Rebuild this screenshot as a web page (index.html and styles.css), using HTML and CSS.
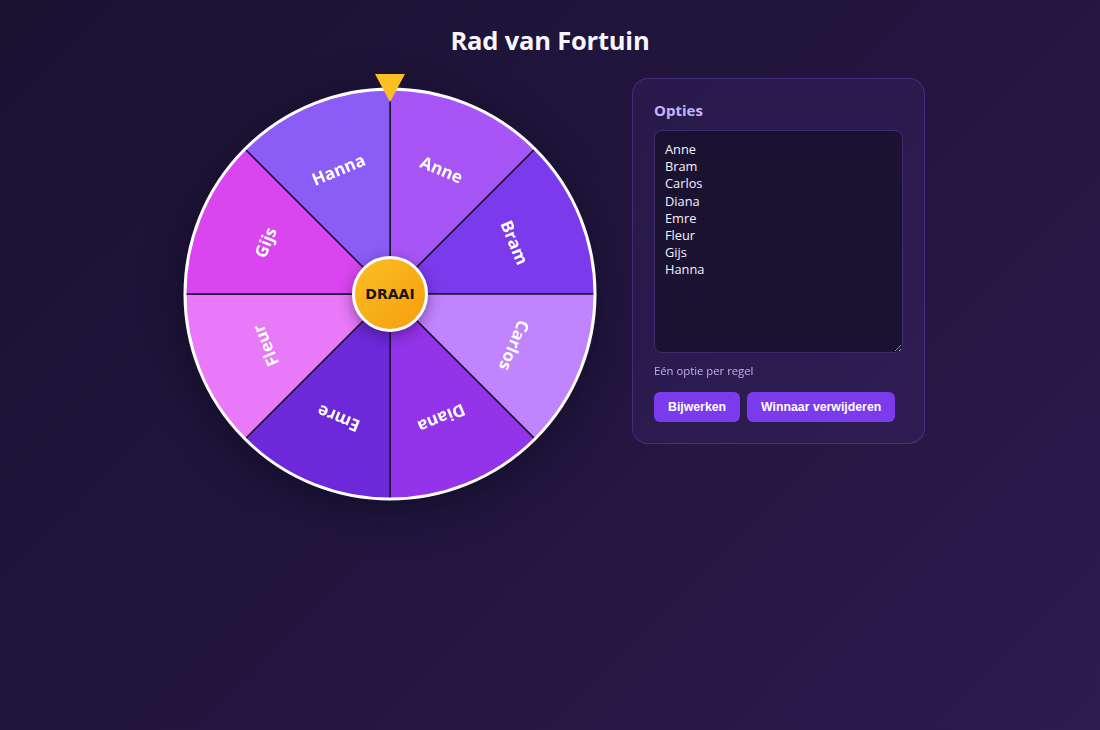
FILE: index.html
```html
<!DOCTYPE html>
<html lang="nl">
<head>
<meta charset="utf-8">
<title>Rad van Fortuin</title>
<link rel="stylesheet" href="styles.css">
</head>
<body>
<div class="app">
  <h1 class="title">Rad van Fortuin</h1>
  <div class="layout">
    <div class="wheel-wrap">
      <div class="pointer"></div>
      <svg class="wheel" viewBox="0 0 420 420" width="420" height="420">
        <g class="segments">
          <path class="seg seg-anne" d="M210 210 L210 5 A205 205 0 0 1 354.96 65.04 Z"/>
          <path class="seg seg-bram" d="M210 210 L354.96 65.04 A205 205 0 0 1 415 210 Z"/>
          <path class="seg seg-carlos" d="M210 210 L415 210 A205 205 0 0 1 354.96 354.96 Z"/>
          <path class="seg seg-diana" d="M210 210 L354.96 354.96 A205 205 0 0 1 210 415 Z"/>
          <path class="seg seg-emre" d="M210 210 L210 415 A205 205 0 0 1 65.04 354.96 Z"/>
          <path class="seg seg-fleur" d="M210 210 L65.04 354.96 A205 205 0 0 1 5 210 Z"/>
          <path class="seg seg-gijs" d="M210 210 L5 210 A205 205 0 0 1 65.04 65.04 Z"/>
          <path class="seg seg-hanna" d="M210 210 L65.04 65.04 A205 205 0 0 1 210 5 Z"/>
        </g>
        <circle class="rim" cx="210" cy="210" r="205"/>
        <g class="labels">
          <text class="label" transform="translate(261.66 85.28) rotate(22.5)">Anne</text>
          <text class="label" transform="translate(334.72 158.34) rotate(67.5)">Bram</text>
          <text class="label" transform="translate(334.72 261.66) rotate(112.5)">Carlos</text>
          <text class="label" transform="translate(261.66 334.72) rotate(157.5)">Diana</text>
          <text class="label" transform="translate(158.34 334.72) rotate(202.5)">Emre</text>
          <text class="label" transform="translate(85.28 261.66) rotate(247.5)">Fleur</text>
          <text class="label" transform="translate(85.28 158.34) rotate(292.5)">Gijs</text>
          <text class="label" transform="translate(158.34 85.28) rotate(337.5)">Hanna</text>
        </g>
      </svg>
      <button class="spin">DRAAI</button>
    </div>
    <div class="panel">
      <h2 class="panel-title">Opties</h2>
      <textarea class="options">Anne
Bram
Carlos
Diana
Emre
Fleur
Gijs
Hanna</textarea>
      <p class="hint">Eén optie per regel</p>
      <div class="actions">
        <button class="btn">Bijwerken</button>
        <button class="btn">Winnaar verwijderen</button>
      </div>
    </div>
  </div>
</div>
</body>
</html>
```

FILE: styles.css
```css
html, body {
  margin: 0;
  padding: 0;
}

body {
  min-height: 100vh;
  background: linear-gradient(135deg, #1b1232 0%, #221640 55%, #2e1a4f 100%);
  font-family: "Open Sans", "Noto Sans", sans-serif;
  color: #f5f3ff;
}

.app {
  padding-top: 22px;
}

.title {
  margin: 0 0 20px;
  text-align: center;
  font-size: 25.5px;
  line-height: 36px;
  font-weight: 700;
  color: #f8f5ff;
  letter-spacing: -0.2px;
}

.layout {
  display: flex;
  justify-content: center;
  align-items: flex-start;
  gap: 32px;
  padding-left: 5px;
}

.wheel-wrap {
  position: relative;
  width: 420px;
  height: 420px;
  margin-top: 6px;
}

.wheel {
  display: block;
  filter: drop-shadow(0 10px 22px rgba(5, 2, 15, 0.45));
}

.seg {
  stroke: #1c1433;
  stroke-width: 1.5;
}

.seg-anne { fill: #a855f7; }
.seg-bram { fill: #7c3aed; }
.seg-carlos { fill: #c084fc; }
.seg-diana { fill: #9333ea; }
.seg-emre { fill: #6d28d9; }
.seg-fleur { fill: #e879f9; }
.seg-gijs { fill: #d946ef; }
.seg-hanna { fill: #8b5cf6; }

.rim {
  fill: none;
  stroke: #ffffff;
  stroke-width: 3;
}

.label {
  font-family: "Open Sans", "Noto Sans", sans-serif;
  font-size: 17px;
  font-weight: 700;
  fill: #ffffff;
  text-anchor: middle;
  dominant-baseline: central;
}

.pointer {
  position: absolute;
  top: -10px;
  left: 195px;
  width: 0;
  height: 0;
  border-left: 15px solid transparent;
  border-right: 15px solid transparent;
  border-top: 28px solid #fbbf24;
  z-index: 2;
}

.spin {
  position: absolute;
  left: 172px;
  top: 172px;
  width: 76px;
  height: 76px;
  box-sizing: border-box;
  border: 3px solid #ffffff;
  border-radius: 50%;
  background: linear-gradient(135deg, #fbbf24 0%, #f59e0b 100%);
  box-shadow: 0 4px 14px rgba(30, 10, 60, 0.45);
  font-family: "DejaVu Sans", sans-serif;
  font-size: 14px;
  font-weight: 700;
  color: #1c1410;
  padding: 0;
  cursor: pointer;
}

.panel {
  width: 293px;
  box-sizing: border-box;
  padding: 21px;
  border: 1px solid rgba(139, 92, 246, 0.28);
  border-radius: 16px;
  background: rgba(139, 92, 246, 0.08);
}

.panel-title {
  margin: 0 0 10px;
  font-size: 15px;
  line-height: 20px;
  font-weight: 700;
  color: #c4b5fd;
}

.options {
  display: block;
  width: 100%;
  height: 223px;
  box-sizing: border-box;
  padding: 10px;
  border: 1px solid #3d2c6b;
  border-radius: 8px;
  background: #1b1231;
  color: #f5f3ff;
  font-family: "Open Sans", "Noto Sans", sans-serif;
  font-size: 12.8px;
  line-height: 17.2px;
  resize: vertical;
  outline: none;
}

.hint {
  margin: 10px 0 0;
  font-size: 11.3px;
  line-height: 15px;
  color: #cbbdfd;
  opacity: 0.92;
}

.actions {
  display: flex;
  gap: 7px;
  margin-top: 14px;
}

.btn {
  height: 30px;
  padding: 0 14px;
  border: none;
  border-radius: 6px;
  background: #7c3aed;
  color: #ffffff;
  font-family: "Liberation Sans", Arial, sans-serif;
  font-size: 12.3px;
  font-weight: 700;
  cursor: pointer;
}
```
